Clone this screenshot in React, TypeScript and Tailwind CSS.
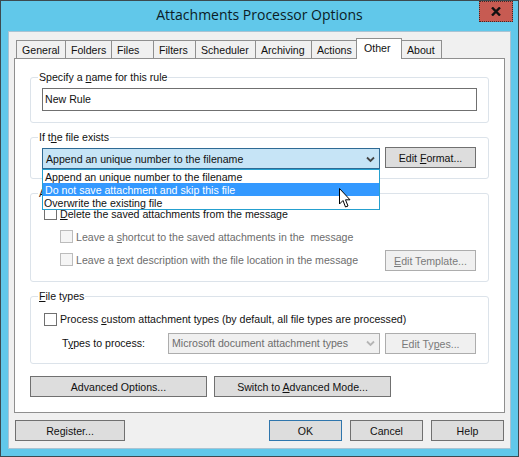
const font = "font-['Liberation_Sans',Arial,sans-serif]";

const tabs = [
  { label: "General", w: "w-[50px]" },
  { label: "Folders", w: "w-[47px]" },
  { label: "Files", w: "w-[43px]" },
  { label: "Filters", w: "w-[43px]" },
  { label: "Scheduler", w: "w-[61px]" },
  { label: "Archiving", w: "w-[57px]" },
  { label: "Actions", w: "w-[46px]" },
];

const Btn = ({
  children,
  className = "",
  disabled = false,
}: {
  children: React.ReactNode;
  className?: string;
  disabled?: boolean;
}) => (
  <div
    className={`flex h-[21px] items-center justify-center border ${
      disabled ? "border-[#adadad] bg-[#f0f0f0] text-[#7a7a7a]" : "border-[#707070] bg-[#dddddd] text-[#111]"
    } ${className}`}
  >
    <span className="h-[13px] leading-[15px]">{children}</span>
  </div>
);

const Check = ({ disabled = false }: { disabled?: boolean }) => (
  <div className={`h-[13px] w-[13px] shrink-0 border ${disabled ? "border-[#bcbcbc] bg-[#f5f5f5]" : "border-[#707070] bg-white"}`} />
);

const Group = ({
  label,
  className,
  children,
}: {
  label: React.ReactNode;
  className: string;
  children?: React.ReactNode;
}) => (
  <div className={`relative rounded-[3px] border border-[#dce3ea] ${className}`}>
    <span className="absolute top-[-8px] left-[7px] bg-white px-[1px] leading-[14px] text-[#111]">{label}</span>
    {children}
  </div>
);

const Chevron = ({ color }: { color: string }) => (
  <svg width="9" height="7" viewBox="0 0 9 7" fill="none">
    <path d="M1 1.5 L4.5 5 L8 1.5" stroke={color} strokeWidth="1.8" />
  </svg>
);

export default function App() {
  return (
    <div className={`relative flex h-[457px] w-[519px] flex-col border border-[#3c4a50] bg-[#61c8ea] px-[7px] pt-[30px] pb-[7px] text-[10.6px] leading-[13px] ${font}`}>
      {/* Title bar */}
      <div className="absolute top-[4px] left-0 w-full text-center font-['Open_Sans',sans-serif] text-[14px] leading-[20px] text-[#0b1c26]">
        Attachments Processor Options
      </div>
      <div className="absolute top-0 right-[5px] flex h-[21px] w-[34px] items-center justify-center border border-dotted border-[#3a2a28] bg-[#c75b52]">
        <svg width="10" height="9" viewBox="0 0 10 9">
          <path d="M1 0.5 L9 8.5 M9 0.5 L1 8.5" stroke="#111" strokeWidth="2.4" />
        </svg>
      </div>

      {/* Client area */}
      <div className="flex flex-1 flex-col border border-[#a9c3d3] bg-[#f0f0f0] px-[5px] pt-[6px]">
        {/* Tabs */}
        <div className="relative z-10 flex h-[20px] items-end pl-[2px]">
          {tabs.map((t) => (
            <div
              key={t.label}
              className={`flex h-[18px] ${t.w} mr-[-1px] items-center border border-b-0 border-[#8f8f8f] bg-[#f0f0f0] pt-[1px] pl-[5px] text-[#111]`}
            >
              {t.label}
            </div>
          ))}
          <div className="mb-[-1px] flex h-[21px] w-[46px] items-start border border-b-0 border-[#8f8f8f] bg-white pt-[3px] pl-[7px] text-[#111]">
            Other
          </div>
          <div className="ml-[-1px] flex h-[18px] w-[41px] items-center border border-b-0 border-[#8f8f8f] bg-[#f0f0f0] pt-[1px] pl-[5px] text-[#111]">
            About
          </div>
        </div>

        {/* Panel */}
        <div className="relative flex h-[355px] flex-col border border-[#8f8f8f] bg-white px-[15px] pt-[18px] text-[#111]">
          <Group
            className="h-[46px]"
            label={
              <>
                Specify a <u>n</u>ame for this rule
              </>
            }
          >
            <div className="mx-[11px] mt-[10px] flex h-[23px] items-center border border-[#707070] pl-[2px]">New Rule</div>
          </Group>

          <Group
            className="mt-[14px] h-[42px]"
            label={
              <>
                If t<u>h</u>e file exists
              </>
            }
          >
            <div className="mt-[10px] flex items-start pl-[11px]">
              <div className="flex h-[21px] w-[338px] items-center justify-between border border-[#2f6a94] bg-[#c6e4f6] pt-[1px] pr-[4px] pl-[3px]">
                <span>Append an unique number to the filename</span>
                <Chevron color="#444" />
              </div>
              <Btn className="mt-[-1px] ml-[5px] w-[91px]">
                Edit <u>F</u>ormat...
              </Btn>
            </div>
          </Group>

          <Group className="mt-[14px] h-[89px]" label="After processing">
            <div className="flex items-center gap-[3px] pt-[13px] pl-[13px]">
              <Check />
              <span className="h-[13px] leading-[15px]">
                <u>D</u>elete the saved attachments from the message
              </span>
            </div>
            <div className="flex items-center gap-[3px] pt-[10px] pl-[29px] text-[#6d6d6d]">
              <Check disabled />
              <span className="h-[13px] leading-[15px]">
                Leave a <u>s</u>hortcut to the saved attachments in the&nbsp; message
              </span>
            </div>
            <div className="flex items-center gap-[3px] pt-[10px] pl-[29px] text-[#6d6d6d]">
              <Check disabled />
              <span className="h-[13px] leading-[15px]">
                Leave a <u>t</u>ext description with the file location in the message
              </span>
              <Btn className="absolute top-[56px] left-[354px] w-[91px]" disabled>
                <u>E</u>dit Template...
              </Btn>
            </div>
          </Group>

          <Group
            className="mt-[14px] h-[68px]"
            label={
              <>
                <u>F</u>ile types
              </>
            }
          >
            <div className="flex items-center gap-[3px] pt-[16px] pl-[13px]">
              <Check />
              <span>
                Process <u>c</u>ustom attachment types (by default, all file types are processed)
              </span>
            </div>
            <div className="flex items-center pt-[7px] pl-[31px]">
              <span className="w-[106px]">
                T<u>y</u>pes to process:
              </span>
              <div className="flex h-[21px] w-[212px] items-center justify-between border border-[#adadad] bg-[#f0f0f0] pr-[4px] pl-[3px] text-[#6d6d6d]">
                <span>Microsoft document attachment types</span>
                <Chevron color="#b5b5b5" />
              </div>
              <Btn className="mt-[-1px] ml-[5px] w-[91px]" disabled>
                Edit Ty<u>p</u>es...
              </Btn>
            </div>
          </Group>

          <div className="mt-[12px] flex gap-[7px]">
            <Btn className="w-[177px]">Advanced Options...</Btn>
            <Btn className="w-[177px]">
              Switch to <u>A</u>dvanced Mode...
            </Btn>
          </div>

          {/* Open dropdown list */}
          <div className="absolute top-[110px] left-[27px] z-20 flex h-[41px] w-[338px] flex-col border border-[#25a0cf] bg-white leading-[15px] text-[#111]">
            <div className="h-[13px] pl-[2px]">Append an unique number to the filename</div>
            <div className="h-[13px] bg-[#3399ff] pl-[2px] text-white">Do not save attachment and skip this file</div>
            <div className="h-[13px] pl-[1px]">Overwrite the existing file</div>
          </div>

          {/* Mouse pointer */}
          <svg className="absolute top-[129px] left-[323px] z-30" width="14" height="21" viewBox="0 0 14 21">
            <path
              d="M1.5 0.5 V16 L5 12.5 L7.5 19 L10 18 L7.5 11.8 L12 11.8 Z"
              fill="#fff"
              stroke="#000"
              strokeWidth="1"
            />
          </svg>
        </div>

        {/* Footer buttons */}
        <div className="mt-[7px] flex pl-[1px] text-[#111]">
          <Btn className="w-[110px]">Register...</Btn>
          <Btn className="ml-[144px] w-[73px] !border-[#2f76ad]">OK</Btn>
          <Btn className="ml-[8px] w-[73px]">Cancel</Btn>
          <Btn className="ml-[8px] w-[73px]">Help</Btn>
        </div>
      </div>
    </div>
  );
}
